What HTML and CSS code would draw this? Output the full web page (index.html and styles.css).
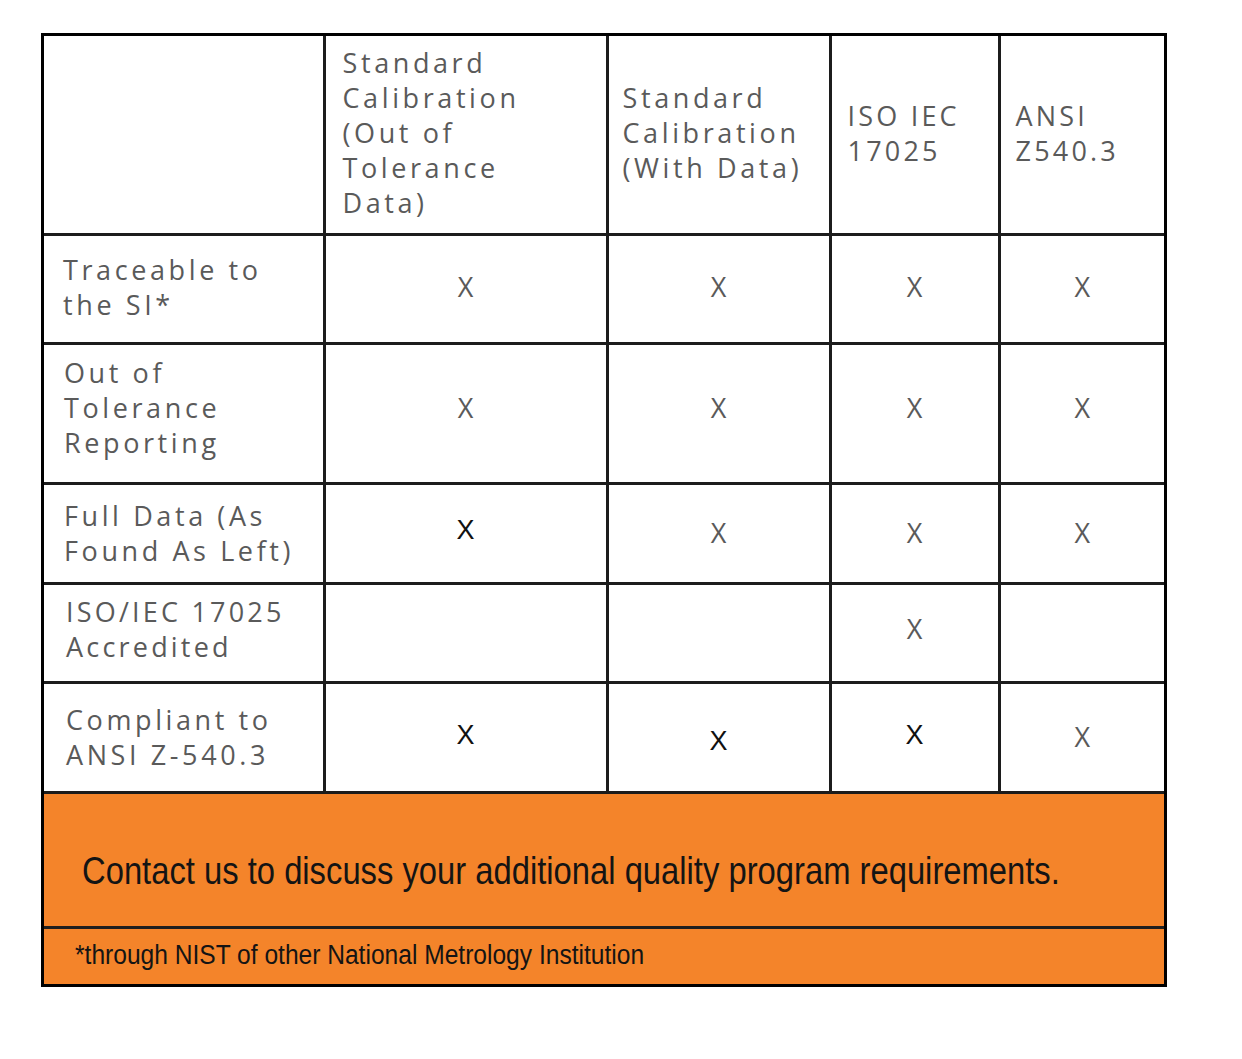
FILE: index.html
```html
<!DOCTYPE html>
<html lang="en">
<head>
<meta charset="utf-8">
<title>Calibration Levels</title>
<link rel="stylesheet" href="styles.css">
</head>
<body>
<div class="sheet">
  <table class="grid">
    <colgroup>
      <col class="c1"><col class="c2"><col class="c3"><col class="c4"><col class="c5">
    </colgroup>
    <thead>
      <tr class="r-head">
        <th class="blank"></th>
        <th class="h h2">Standard<br>Calibration<br>(Out of<br>Tolerance<br>Data)</th>
        <th class="h h3">Standard<br>Calibration<br>(With Data)</th>
        <th class="h h4">ISO IEC<br>17025</th>
        <th class="h h5">ANSI<br>Z540.3</th>
      </tr>
    </thead>
    <tbody>
      <tr class="r1">
        <td class="label">Traceable to<br>the SI*</td>
        <td class="mark">X</td>
        <td class="mark">X</td>
        <td class="mark">X</td>
        <td class="mark">X</td>
      </tr>
      <tr class="r2">
        <td class="label">Out of<br>Tolerance<br>Reporting</td>
        <td class="mark">X</td>
        <td class="mark">X</td>
        <td class="mark">X</td>
        <td class="mark">X</td>
      </tr>
      <tr class="r3">
        <td class="label">Full Data (As<br>Found As Left)</td>
        <td class="mark dark">X</td>
        <td class="mark">X</td>
        <td class="mark">X</td>
        <td class="mark">X</td>
      </tr>
      <tr class="r4">
        <td class="label">ISO/IEC 17025<br>Accredited</td>
        <td class="mark"></td>
        <td class="mark"></td>
        <td class="mark">X</td>
        <td class="mark"></td>
      </tr>
      <tr class="r5">
        <td class="label">Compliant to<br>ANSI Z-540.3</td>
        <td class="mark dark">X</td>
        <td class="mark dark low">X</td>
        <td class="mark dark">X</td>
        <td class="mark">X</td>
      </tr>
    </tbody>
  </table>
  <div class="contact"><span class="narrow main">Contact us to discuss your additional quality program requirements.</span></div>
  <div class="note"><span class="narrow foot">*through NIST of other National Metrology Institution</span></div>
</div>
</body>
</html>
```

FILE: styles.css
```css
html, body {
  margin: 0;
  padding: 0;
  background: #ffffff;
}

.sheet {
  margin: 33px 0 0 41px;
  width: 1120px;
  border: 3px solid #000000;
}

.grid {
  width: 1120px;
  border-collapse: collapse;
  border-style: hidden;
  table-layout: fixed;
  font-family: "Open Sans", "Noto Sans", sans-serif;
  color: #5a5a5a;
}

.c1 { width: 280px; }
.c2 { width: 283px; }
.c3 { width: 223px; }
.c4 { width: 169px; }
.c5 { width: 165px; }

.grid th,
.grid td {
  border: 3px solid #1c1c1c;
  padding: 0;
  vertical-align: middle;
  font-size: 27px;
  line-height: 35px;
  letter-spacing: 3.6px;
  font-weight: 400;
  text-align: left;
}

/* row height = height + padding + 3px border */
.r-head th { height: 193px; padding-bottom: 4px; }
.r1 td { height: 101px; padding-bottom: 5px; }
.r2 td { height: 125px; padding-bottom: 12px; }
.r3 td { height: 95px; padding-bottom: 2px; }
.r4 td { height: 87px; padding-bottom: 9px; }
.r5 td { height: 105px; padding-bottom: 2px; }

.grid th.h2 { padding-left: 17px; }
.grid th.h3 { padding-left: 14px; }
.grid th.h4 { padding-left: 16px; letter-spacing: 3.2px; }
.grid th.h5 { padding-left: 15px; letter-spacing: 3.2px; }

.grid td.label { padding-left: 19px; }
.r2 td.label,
.r3 td.label { padding-left: 20px; }
.r4 td.label,
.r5 td.label { padding-left: 22px; }
.r4 td.label { letter-spacing: 3.2px; }

.grid td.mark {
  text-align: center;
  letter-spacing: 0;
  font-size: 27px;
  color: #5a5a5a;
}

.grid td.mark.dark {
  font-family: "Liberation Sans", Arial, sans-serif;
  color: #111111;
  font-size: 27px;
}

.r3 td.mark.dark {
  height: 91px;
  padding-bottom: 6px;
}

.r5 td.mark.dark {
  height: 103px;
  padding-bottom: 4px;
}

.r5 td.mark.low {
  height: 99px;
  padding-top: 8px;
  padding-bottom: 0;
}

.contact {
  box-sizing: border-box;
  height: 138px;
  background: #f4842a;
  border-top: 3px solid #1c1c1c;
  border-bottom: 3px solid #1f1f1f;
  padding: 54px 0 0 38px;
  white-space: nowrap;
  overflow: hidden;
}

.note {
  box-sizing: border-box;
  height: 55px;
  background: #f4842a;
  padding: 11px 0 0 31px;
  white-space: nowrap;
  overflow: hidden;
}

.narrow {
  display: inline-block;
  font-family: "Liberation Sans", Arial, sans-serif;
  color: #141414;
  transform-origin: 0 50%;
}

.main {
  font-size: 39px;
  line-height: 45px;
  transform: scaleX(0.84);
}

.foot {
  font-size: 27px;
  line-height: 31px;
  transform: scaleX(0.91);
}
```
